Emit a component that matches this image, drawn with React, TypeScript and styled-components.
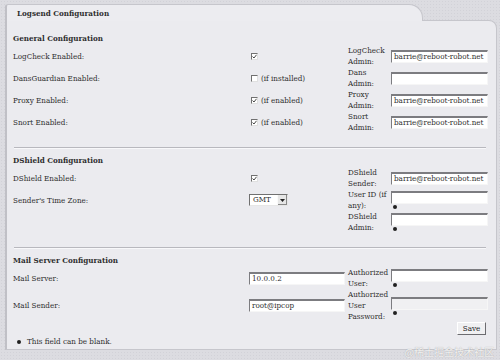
import React from "react";
import styled, { createGlobalStyle } from "styled-components";

const GlobalStyle = createGlobalStyle`
  html, body {
    margin: 0;
    padding: 0;
    background: #dcdce1;
  }
  body {
    font-family: "DejaVu Serif Condensed", "DejaVu Serif", "Liberation Serif", serif;
    font-stretch: condensed;
    font-size: 8px;
    color: #2e2e2e;
  }
`;

const Page = styled.div`
  width: 500px;
  height: 360px;
  box-sizing: border-box;
  padding: 4px 3px 0 5px;
  background-color: #dcdce1;
  background-image: radial-gradient(#d2d2d8 0.6px, transparent 0.7px);
  background-size: 3px 3px;
  position: relative;
  overflow: hidden;
`;

const Tab = styled.div`
  position: relative;
  z-index: 1;
  width: 418px;
  height: 17px;
  box-sizing: border-box;
  margin-bottom: -1px;
  padding-left: 10px;
  display: flex;
  align-items: center;
  background: #ececf0;
  border: 1px solid #c6c6cc;
  border-bottom: none;
  border-left: 2px solid #c0c0c6;
  border-radius: 3px 14px 0 0;
  font-weight: bold;
`;

const Body = styled.div`
  background: #ebebef;
  border: 1px solid #c6c6cc;
  border-left: 2px solid #c0c0c6;
  border-radius: 0 8px 0 0;
  padding: 11px 8px 0 6px;
  height: 330px;
  box-sizing: border-box;
  display: flex;
  flex-direction: column;
`;

const Section = styled.div`
  display: flex;
  flex-direction: column;
`;

const Heading = styled.div`
  font-weight: bold;
  height: 12px;
  line-height: 12px;
  margin-bottom: 1px;
`;

const Grid = styled.div`
  display: grid;
  grid-template-columns: 236px 99px 43px 97px;
  grid-auto-rows: minmax(21px, auto);
  align-items: center;
`;

const Label = styled.div`
  line-height: 11px;
`;

const Cell = styled.div`
  display: flex;
  align-items: center;
  gap: 3px;
`;

const StackCell = styled.div`
  display: flex;
  flex-direction: column;
  align-items: flex-start;
`;

const Input = styled.div<{ $width?: number; $pw?: boolean }>`
  width: ${(p) => p.$width ?? 97}px;
  height: 13px;
  box-sizing: border-box;
  background: ${(p) => (p.$pw ? "#f0f0f2" : "#ffffff")};
  border-top: 2px solid #7c7c80;
  border-left: 1px solid #7c7c80;
  border-right: 1px solid #f6f6f6;
  border-bottom: 1px solid #f6f6f6;
  padding-left: 2px;
  line-height: 10px;
  white-space: nowrap;
  overflow: hidden;
`;

const Dot = styled.span`
  width: 4px;
  height: 4px;
  border-radius: 50%;
  background: #202020;
  margin: 1px 0 0 2px;
`;

const Box = styled.span`
  width: 7px;
  height: 7px;
  box-sizing: border-box;
  background: #ffffff;
  border-top: 1px solid #707070;
  border-left: 1px solid #707070;
  border-right: 1px solid #e0e0e0;
  border-bottom: 1px solid #e0e0e0;
  margin-left: 2px;
  display: inline-flex;
  align-items: center;
  justify-content: center;
`;

const Checkbox: React.FC<{ checked?: boolean }> = ({ checked }) => (
  <Box>
    {checked && (
      <svg width="5" height="5" viewBox="0 0 5 5">
        <path d="M0.5 2.5 L2 4 L4.5 0.8" stroke="#333" strokeWidth="0.9" fill="none" />
      </svg>
    )}
  </Box>
);

const Separator = styled.div`
  height: 0;
  border-top: 1px solid #b8b8be;
  border-bottom: 1px solid #f8f8fa;
  margin: 14px 2px 5px 1px;
`;

const Select = styled.div`
  width: 39px;
  height: 12px;
  box-sizing: border-box;
  display: flex;
  background: #fff;
  border-top: 1px solid #707070;
  border-left: 1px solid #707070;
  border-right: 1px solid #e6e6e6;
  border-bottom: 1px solid #e6e6e6;
`;

const SelectText = styled.span`
  flex: 1;
  padding-left: 3px;
  line-height: 10px;
`;

const SelectArrow = styled.span`
  width: 9px;
  background: #e6e6e6;
  border-left: 1px solid #fafafa;
  box-shadow: inset -1px -1px 0 #888;
  display: flex;
  align-items: center;
  justify-content: center;
`;

const Footer = styled.div`
  display: flex;
  flex-direction: column;
`;

const ButtonRow = styled.div`
  display: flex;
  justify-content: flex-end;
  padding-right: 2px;
`;

const Button = styled.button`
  font-family: inherit;
  font-stretch: condensed;
  font-size: 8px;
  color: #222;
  width: 29px;
  height: 13px;
  padding: 0;
  background: #f0f0f2;
  border-top: 1px solid #ffffff;
  border-left: 1px solid #ffffff;
  border-right: 1px solid #6c6c70;
  border-bottom: 1px solid #6c6c70;
`;

const Note = styled.div`
  display: flex;
  align-items: center;
  gap: 6px;
  margin-top: 2px;
  padding-left: 2px;
`;

const Watermark = styled.div`
  position: absolute;
  right: 6px;
  bottom: 1px;
  font-family: "Noto Sans CJK SC", "DejaVu Sans", sans-serif;
  font-size: 10px;
  color: rgba(255, 255, 255, 0.85);
  text-shadow: 0 0 1px #9a9a9a;
`;

const Field: React.FC<{ value?: string; blank?: boolean; pw?: boolean }> = ({
  value,
  blank,
  pw,
}) =>
  blank ? (
    <StackCell>
      <Input $pw={pw}>{value}</Input>
      <Dot />
    </StackCell>
  ) : (
    <Input $pw={pw}>{value}</Input>
  );

const App: React.FC = () => {
  const email = "barrie@reboot-robot.net";
  return (
    <>
      <GlobalStyle />
      <Page>
        <Tab>Logsend Configuration</Tab>
        <Body>
          <Section>
            <Heading>General Configuration</Heading>
            <Grid>
              <Label>LogCheck Enabled:</Label>
              <Cell><Checkbox checked /></Cell>
              <Label>LogCheck Admin:</Label>
              <Field value={email} />

              <Label>DansGuardian Enabled:</Label>
              <Cell><Checkbox /> (if installed)</Cell>
              <Label>Dans Admin:</Label>
              <Field />

              <Label>Proxy Enabled:</Label>
              <Cell><Checkbox checked /> (if enabled)</Cell>
              <Label>Proxy Admin:</Label>
              <Field value={email} />

              <Label>Snort Enabled:</Label>
              <Cell><Checkbox checked /> (if enabled)</Cell>
              <Label>Snort Admin:</Label>
              <Field value={email} />
            </Grid>
          </Section>

          <Separator />

          <Section>
            <Heading>DShield Configuration</Heading>
            <Grid>
              <Label>DShield Enabled:</Label>
              <Cell><Checkbox checked /></Cell>
              <Label>DShield Sender:</Label>
              <Field value={email} />

              <Label>Sender's Time Zone:</Label>
              <Cell>
                <Select>
                  <SelectText>GMT</SelectText>
                  <SelectArrow>
                    <svg width="5" height="3" viewBox="0 0 5 3">
                      <path d="M0 0 H5 L2.5 3 Z" fill="#222" />
                    </svg>
                  </SelectArrow>
                </Select>
              </Cell>
              <Label>User ID (if any):</Label>
              <Field blank />

              <Label />
              <Cell />
              <Label>DShield Admin:</Label>
              <Field blank />
            </Grid>
          </Section>

          <Separator />

          <Section>
            <Heading>Mail Server Configuration</Heading>
            <Grid>
              <Label>Mail Server:</Label>
              <Cell><Input $width={96}>10.0.0.2</Input></Cell>
              <Label>Authorized User:</Label>
              <Field blank />

              <Label>Mail Sender:</Label>
              <Cell><Input $width={96}>root@ipcop</Input></Cell>
              <Label>Authorized User Password:</Label>
              <Field blank pw />
            </Grid>
          </Section>

          <Footer>
            <ButtonRow>
              <Button>Save</Button>
            </ButtonRow>
            <Note>
              <Dot />
              This field can be blank.
            </Note>
          </Footer>
        </Body>
        <Watermark>@稀土掘金技术社区</Watermark>
      </Page>
    </>
  );
};

export default App;
